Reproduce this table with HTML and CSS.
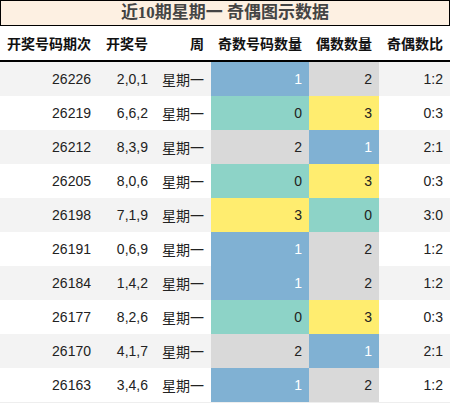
FILE: index.html
```html
<!DOCTYPE html>
<html lang="zh-CN">
<head>
  <meta charset="UTF-8">
  <title>近10期星期一 奇偶图示数据</title>
  <link rel="stylesheet" href="styles.css">
</head>
<body>
  <div id="wrap">
    <div class="title">近10期星期一 奇偶图示数据</div>
    <table class="data">
      <thead>
        <tr>
          <th class="c1">开奖号码期次</th>
          <th class="c2">开奖号</th>
          <th class="c3">周</th>
          <th class="c4">奇数号码数量</th>
          <th class="c5">偶数数量</th>
          <th class="c6">奇偶数比</th>
        </tr>
      </thead>
      <tbody>
        <tr><td>26226</td><td>2,0,1</td><td>星期一</td><td class="v1">1</td><td class="v2">2</td><td>1:2</td></tr>
        <tr><td>26219</td><td>6,6,2</td><td>星期一</td><td class="v0">0</td><td class="v3">3</td><td>0:3</td></tr>
        <tr><td>26212</td><td>8,3,9</td><td>星期一</td><td class="v2">2</td><td class="v1">1</td><td>2:1</td></tr>
        <tr><td>26205</td><td>8,0,6</td><td>星期一</td><td class="v0">0</td><td class="v3">3</td><td>0:3</td></tr>
        <tr><td>26198</td><td>7,1,9</td><td>星期一</td><td class="v3">3</td><td class="v0">0</td><td>3:0</td></tr>
        <tr><td>26191</td><td>0,6,9</td><td>星期一</td><td class="v1">1</td><td class="v2">2</td><td>1:2</td></tr>
        <tr><td>26184</td><td>1,4,2</td><td>星期一</td><td class="v1">1</td><td class="v2">2</td><td>1:2</td></tr>
        <tr><td>26177</td><td>8,2,6</td><td>星期一</td><td class="v0">0</td><td class="v3">3</td><td>0:3</td></tr>
        <tr><td>26170</td><td>4,1,7</td><td>星期一</td><td class="v2">2</td><td class="v1">1</td><td>2:1</td></tr>
        <tr><td>26163</td><td>3,4,6</td><td>星期一</td><td class="v1">1</td><td class="v2">2</td><td>1:2</td></tr>
      </tbody>
    </table>
  </div>
</body>
</html>
```

FILE: styles.css
```css
body{
  margin: 0;
  background: #fff;
  font-family: "Liberation Sans", "Noto Sans CJK SC", sans-serif;
  color: #222;
}
#wrap{
  width: 450px;
}
.title{
  height: 24px;
  line-height: 24px;
  border: 1px solid #000;
  background: #fdf0e2;
  text-align: center;
  font-family: "Liberation Serif", "Noto Sans CJK SC", serif;
  font-weight: bold;
  font-size: 17px;
  color: #444;
}
.data{
  width: 450px;
  border-collapse: collapse;
  table-layout: fixed;
  font-size: 14px;
}
.data th,
.data td{
  padding: 0 7px 0 0;
  text-align: right;
  white-space: nowrap;
}
.data th{
  height: 34px;
  font-weight: bold;
  color: #111;
  border-bottom: 2px solid #000;
}
.data td{
  height: 34px;
}
/* column widths exclude the 7px right padding */
.c1{ width: 91px; }
.c2{ width: 50px; }
.c3{ width: 49px; }
.c4{ width: 91px; }
.c5{ width: 63px; }
.c6{ width: 64px; }
.data tbody tr:nth-child(odd){
  background: #f3f3f3;
}
.data tbody tr:last-child td{
  border-bottom: 1px solid #eee;
}
.v0{ background: #8dd3c7; }
.v1{ background: #80b1d3; color: #fff; }
.v2{ background: #d9d9d9; }
.v3{ background: #ffed6f; }
```
